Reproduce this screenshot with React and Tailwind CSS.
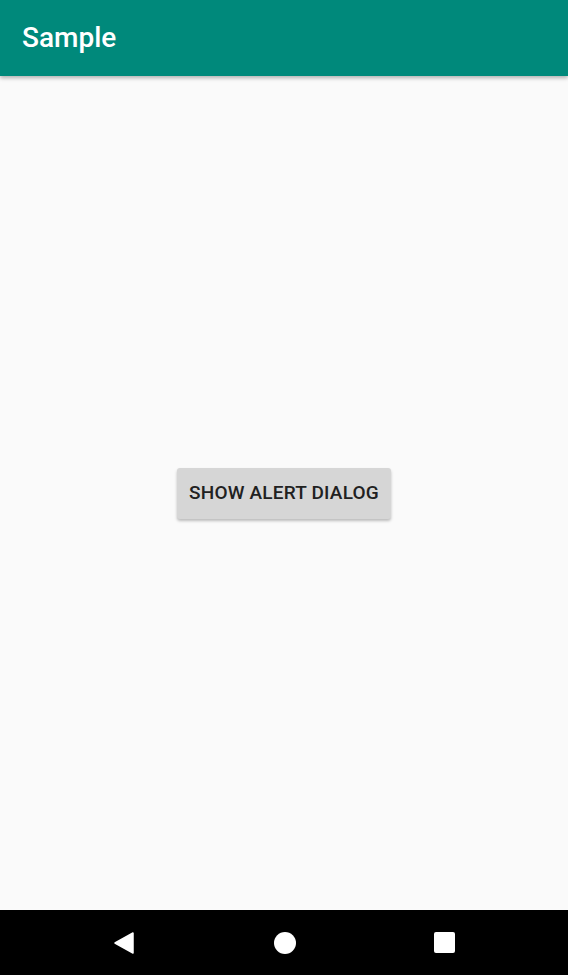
export default function App() {
  return (
    <div className="flex h-[975px] w-[568px] flex-col bg-[#fafafa] font-['Roboto',sans-serif]">
      {/* app bar */}
      <div className="relative z-10 flex h-[76px] shrink-0 items-center bg-[#00897b] px-[22px] shadow-[0_2px_4px_rgba(0,0,0,0.3)]">
        <h1 className="text-[28px] font-medium text-white">Sample</h1>
      </div>

      <div className="flex flex-1 items-center justify-center">
        <button className="h-[51px] rounded-[3px] bg-[#d6d6d6] px-[12px] text-[19px] font-medium tracking-[0.2px] text-[#212121] shadow-[0_2px_3px_rgba(0,0,0,0.25)]">
          SHOW ALERT DIALOG
        </button>
      </div>

      {/* system nav bar */}
      <div className="flex h-[65px] shrink-0 items-center justify-center bg-black">
        <div className="flex w-[342px] items-center justify-between">
          <svg width="22" height="22" viewBox="0 0 22 22">
            <path d="M20 1 L20 21 L2 11 Z" fill="white" strokeLinejoin="round" stroke="white" strokeWidth="1.5" />
          </svg>
          <div className="h-[22px] w-[22px] rounded-full bg-white" />
          <div className="h-[21px] w-[21px] rounded-[2px] bg-white" />
        </div>
      </div>
    </div>
  )
}
